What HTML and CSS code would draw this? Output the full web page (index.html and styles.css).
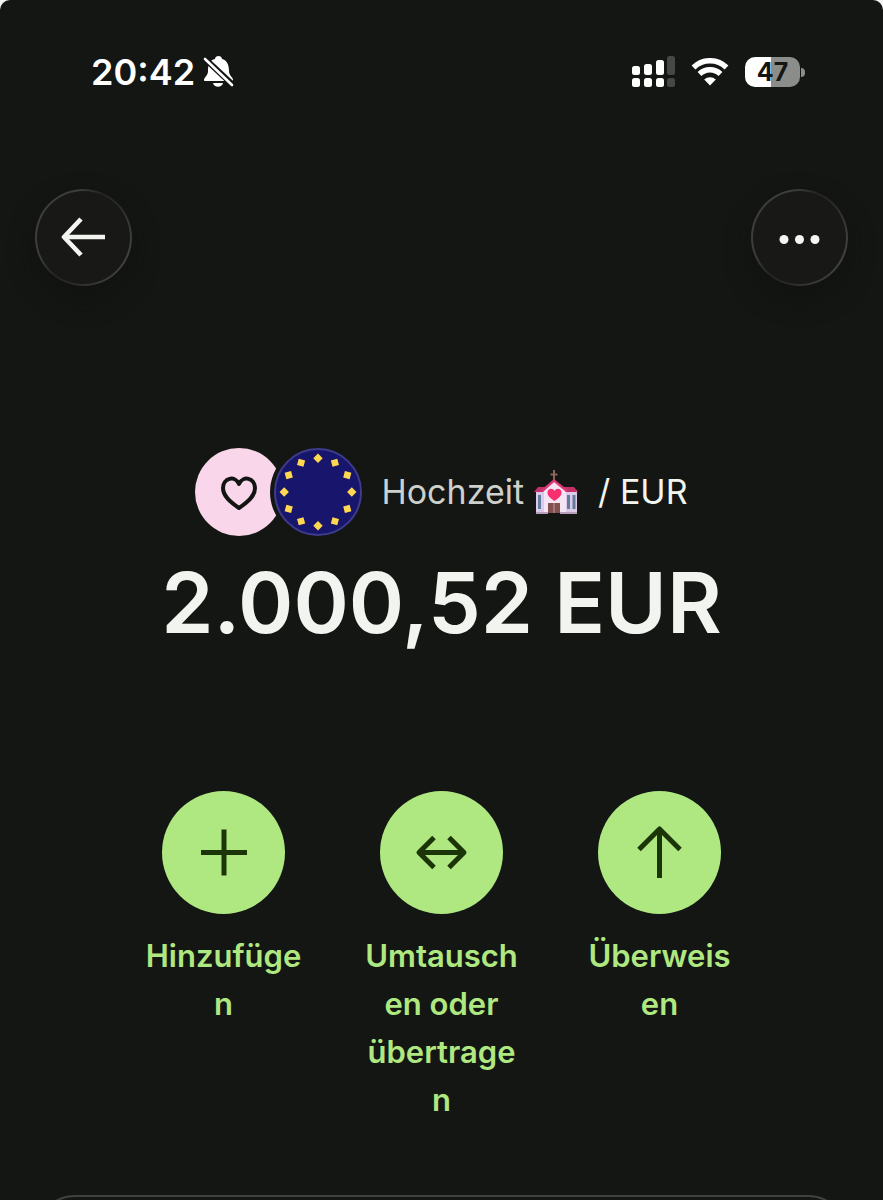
FILE: index.html
```html
<!DOCTYPE html>
<html lang="de">
<head>
<meta charset="utf-8">
<meta name="viewport" content="width=device-width, initial-scale=1">
<title>Hochzeit / EUR</title>
<link rel="stylesheet" href="styles.css">
</head>
<body>
<div class="screen">
  <div class="status">
    <div class="status-group">
      <time class="clock">20:42</time>
      <svg class="bell" width="32" height="34" viewBox="0 0 32 34" aria-hidden="true">
        <path fill="#fff" d="M1 25c0-3 4-4 4-9 0-7 2-11 7-12 0-4 7-4 7 0 5 1 7 6 7 12 0 5 4 6 4 9 0 1-1 1-1 1H2s-1 0-1-1z"/>
        <path fill="#fff" d="M10 28h10c-1 5-9 5-10 0z"/>
        <path stroke="#131613" stroke-width="6" d="M0 2l30 28"/>
        <path stroke="#fff" stroke-width="2.600" stroke-linecap="round" d="M2 4l27 26"/>
      </svg>
    </div>
    <div class="status-group status-right">
      <svg width="43" height="32" viewBox="0 0 43 32" aria-hidden="true">
        <g fill="#fff"><rect x="0" y="10" width="8" height="9" rx="2.5"/><rect x="12" y="8" width="8" height="11" rx="2.5"/><rect x="24" y="4" width="8" height="15" rx="2.5"/><rect x="0" y="22" width="8" height="9" rx="2.5"/><rect x="12" y="22" width="8" height="9" rx="2.5"/><rect x="24" y="22" width="8" height="9" rx="2.5"/></g>
        <g fill="#464846"><rect x="35" y="0" width="8" height="19" rx="2.5"/><rect x="35" y="22" width="8" height="9" rx="2.5"/></g>
      </svg>
      <svg width="38" height="28" viewBox="0 0 38 28" aria-hidden="true">
        <g fill="none" stroke="#fff" stroke-width="5.500"><path d="M2.500 9.500a23.500 23.500 0 0 1 33 0"/><path d="M8.500 16a15 15 0 0 1 21 0"/></g>
        <path fill="#fff" d="M19 27.500l-5.800-6a8.300 8.300 0 0 1 11.600 0z"/>
      </svg>
      <div class="battery"><span class="battery-level">47</span><span class="battery-tip"></span></div>
    </div>
  </div>

  <header class="toolbar">
    <button class="round" type="button" aria-label="Zurück">
      <svg width="48" height="48" viewBox="0 0 48 48" aria-hidden="true"><g fill="none" stroke="#f2f5ef" stroke-width="4.600"><path d="M45 23H5"/><path d="M21 5L4 23l17 18" stroke-linejoin="round"/></g></svg>
    </button>
    <button class="round" type="button" aria-label="Mehr">
      <svg width="48" height="48" viewBox="0 0 48 48" aria-hidden="true"><g fill="#f5f5f5"><circle cx="8" cy="25.500" r="4.500"/><circle cx="23.500" cy="25.500" r="4.500"/><circle cx="39" cy="25.500" r="4.500"/></g></svg>
    </button>
  </header>

  <main>
    <section class="balance">
      <div class="account">
        <svg class="avatars" width="168" height="90" viewBox="0 0 168 90" aria-hidden="true">
          <circle cx="44" cy="45" r="44" fill="#f9d6ea"/>
          <circle cx="123" cy="45" r="48" fill="#131613"/>
          <path d="M44 61C35 55 28 49 28 41c0-10 12-13 16-4 4-9 16-6 16 4 0 8-7 14-16 20z" fill="none" stroke="#121512" stroke-width="4" stroke-linejoin="round"/>
          <circle cx="123" cy="45" r="43" fill="#18166c" stroke="#3e3b8c" stroke-width="2"/>
          <g fill="#ffd84f">
            <path id="star" d="M123 6.500l4.700 4.700-4.700 4.700-4.700-4.700z"/>
            <use href="#star" transform="rotate(30 123 45)"/><use href="#star" transform="rotate(60 123 45)"/><use href="#star" transform="rotate(90 123 45)"/><use href="#star" transform="rotate(120 123 45)"/><use href="#star" transform="rotate(150 123 45)"/><use href="#star" transform="rotate(180 123 45)"/><use href="#star" transform="rotate(210 123 45)"/><use href="#star" transform="rotate(240 123 45)"/><use href="#star" transform="rotate(270 123 45)"/><use href="#star" transform="rotate(300 123 45)"/><use href="#star" transform="rotate(330 123 45)"/>
          </g>
        </svg>
        <div class="account-name">
          <span class="muted">Hochzeit</span>
          <svg class="church" width="44" height="46" viewBox="0 0 44 46" role="img" aria-label="Kirche">
            <path d="M20 1v12M16.500 5.500h7" stroke="#8b6558" stroke-width="2"/>
            <path fill="#dccbe8" d="M2 21h41v22H2z"/>
            <path fill="#f5e4f3" d="M10 21l10-9 12 9v22H10z"/>
            <path fill="#c72f68" d="M4 18h9l-4 5H0zM28 18h12l4 5H32z"/>
            <path fill="none" stroke="#db3772" stroke-width="2.400" d="M8 22l12-10.500L33 22"/>
            <path fill="#647a9e" d="M4 26h3v14H4zM33 26h3v14h-3zM38.500 26h3v14h-3z"/>
            <path fill="#f92f70" d="M20.500 32c-4-3-7-5-7-8.500 0-4 5-5 7-1.500 2-3.500 7-2.500 7 1.500 0 3.500-3 5.500-7 8.500z"/>
            <path fill="#80514e" d="M14 34h12v10H14z"/><path stroke="#c59a9b" d="M20 34v10"/>
            <path fill="#b6a0bc" d="M2 43h12v2H2zM26 43h17v2H26z"/>
          </svg>
          <span>/ EUR</span>
        </div>
      </div>
      <h1 class="amount">2.000,52 EUR</h1>
    </section>

    <nav class="actions" aria-label="Aktionen">
      <button class="action" type="button">
        <span class="action-icon"><svg width="54" height="54" viewBox="0 0 54 54" aria-hidden="true"><path stroke="#1b3509" stroke-width="5" d="M4 26.500h46M27 3.500v46"/></svg></span>
        <span class="action-label">Hinzufügen</span>
      </button>
      <button class="action" type="button">
        <span class="action-icon"><svg width="54" height="54" viewBox="0 0 54 54" aria-hidden="true"><g fill="none" stroke="#1b3509" stroke-width="5" stroke-linejoin="round"><path d="M3.500 26.500h46"/><path d="M19 11.500l-15 15 15 15M34 11.500l15 15-15 15"/></g></svg></span>
        <span class="action-label">Umtauschen oder übertragen</span>
      </button>
      <button class="action" type="button">
        <span class="action-icon"><svg width="54" height="54" viewBox="0 0 54 54" aria-hidden="true"><g fill="none" stroke="#1b3509" stroke-width="5" stroke-linejoin="round"><path d="M26.500 52V3"/><path d="M6 23.500L26.500 3 47 23.500"/></g></svg></span>
        <span class="action-label">Überweisen</span>
      </button>
    </nav>

    <section class="card" aria-label="Details"></section>
  </main>
</div>
</body>
</html>
```
FILE: styles.css
```css
* {
  box-sizing: border-box;
}

html {
  background: #f4f4f4;
}

body {
  margin: 0;
  font-family: Inter, "Liberation Sans", sans-serif;
  color: #f2f5ef;
}

svg {
  display: block;
  flex: none;
}

button {
  padding: 0;
  border: 0;
  background: none;
  color: inherit;
  font: inherit;
  cursor: pointer;
}

.screen {
  height: 100vh;
  overflow: hidden;
  border-radius: 10px 10px 0 0;
  background: #131613;
}

.status {
  display: flex;
  justify-content: space-between;
  align-items: center;
  height: 144px;
  padding: 0 78px 0 91px;
}

.status-group {
  display: flex;
  align-items: center;
  gap: 8px;
}

.status-right {
  gap: 16px;
}

.clock {
  font-size: 36px;
  font-weight: 600;
  line-height: 44px;
  color: #fff;
}

.battery {
  position: relative;
  width: 60px;
}

.battery-level {
  display: block;
  width: 55px;
  height: 30px;
  border-radius: 10px;
  background: linear-gradient(to right, #fff 47%, #8b8d8b 47%);
  color: #131613;
  font-size: 25px;
  font-weight: 700;
  line-height: 30px;
  text-align: center;
}

.battery-tip {
  position: absolute;
  top: 11px;
  right: 0;
  width: 4px;
  height: 9px;
  border-radius: 0 5px 5px 0;
  background: #8b8d8b;
}

.toolbar {
  display: flex;
  justify-content: space-between;
  padding: 45px 35px 0;
}

.round {
  display: grid;
  place-items: center;
  width: 97px;
  height: 97px;
  border: 2px solid transparent;
  border-radius: 50%;
  background:
    linear-gradient(#181816, #181816) padding-box,
    linear-gradient(120deg, #3f403d 10%, #3b3c39 30%, #242522 45%, #2a2b28 60%, #40413e 85%) border-box;
  box-shadow: 0 12px 28px rgba(16, 16, 10, 0.4);
}

.balance {
  display: flex;
  flex-direction: column;
  align-items: center;
  margin-top: 161px;
}

.account {
  display: flex;
  align-items: center;
  gap: 18px;
}

.account-name {
  display: flex;
  align-items: center;
  gap: 10px;
  font-size: 34px;
  line-height: 48px;
}

.account-name span:last-child {
  margin-left: 10px;
}

.muted {
  color: #cdd0cb;
}

.amount {
  margin: 12px 0 0;
  font-size: 84px;
  font-weight: 600;
  line-height: 108px;
}

.actions {
  display: flex;
  justify-content: center;
  align-items: flex-start;
  gap: 60px;
  margin-top: 134px;
}

.action {
  display: flex;
  flex-direction: column;
  align-items: center;
  gap: 18px;
  width: 158px;
  color: #afe880;
}

.action-icon {
  display: grid;
  place-items: center;
  width: 123px;
  height: 123px;
  border-radius: 50%;
  background: #afe880;
}

.action-label {
  width: 100%;
  font-size: 31px;
  font-weight: 600;
  line-height: 48px;
  text-align: center;
  overflow-wrap: anywhere;
}

.card {
  height: 200px;
  margin: 71px 35px 0;
  border: 2px solid #3f413f;
  border-radius: 40px;
}
```
